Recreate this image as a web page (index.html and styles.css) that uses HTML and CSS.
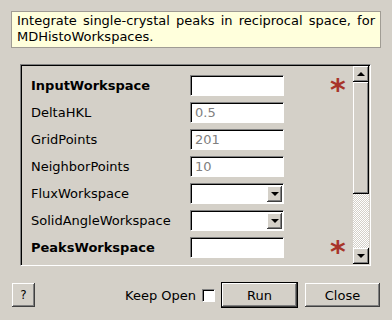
FILE: index.html
```html
<!DOCTYPE html>
<html lang="en">
<head>
  <meta charset="UTF-8">
  <title>IntegratePeaksMDHKL</title>
  <link rel="stylesheet" href="styles.css">
</head>
<body>
  <div class="dialog">
    <div class="desc">Integrate single-crystal peaks in reciprocal space, for MDHistoWorkspaces.</div>

    <div class="frame">
      <div class="props">
        <div class="row">
          <span class="label bold">InputWorkspace</span>
          <span class="field"></span>
          <span class="star">*</span>
        </div>
        <div class="row">
          <span class="label">DeltaHKL</span>
          <span class="field">0.5</span>
        </div>
        <div class="row">
          <span class="label">GridPoints</span>
          <span class="field">201</span>
        </div>
        <div class="row">
          <span class="label">NeighborPoints</span>
          <span class="field">10</span>
        </div>
        <div class="row">
          <span class="label">FluxWorkspace</span>
          <span class="field combo"><span class="drop"><i class="down"></i></span></span>
        </div>
        <div class="row">
          <span class="label">SolidAngleWorkspace</span>
          <span class="field combo"><span class="drop"><i class="down"></i></span></span>
        </div>
        <div class="row">
          <span class="label bold">PeaksWorkspace</span>
          <span class="field"></span>
          <span class="star">*</span>
        </div>
      </div>
      <div class="scrollbar">
        <span class="arrow"><i class="up"></i></span>
        <span class="handle"></span>
        <span class="track"></span>
        <span class="arrow"><i class="down"></i></span>
      </div>
    </div>

    <div class="buttons">
      <span class="btn help">?</span>
      <span class="keep">Keep Open <span class="check"></span></span>
      <span class="btn run">Run</span>
      <span class="btn close">Close</span>
    </div>
  </div>
</body>
</html>
```

FILE: styles.css
```css
body {
  margin: 0;
  background-color: #d4d0c8;
  font-family: 'DejaVu Sans', sans-serif;
  font-size: 13px;
  color: #000;
}

.dialog {
  width: 392px;
  height: 320px;
  padding: 11px 12px 0 11px;
  box-sizing: border-box;
}

.desc {
  background-color: #ffffdc;
  border: 1px solid #a09c94;
  padding: 1px 5px 2px 5px;
  line-height: 16px;
  height: 37px;
  box-sizing: border-box;
  text-align: justify;
  text-align-last: left;
  margin-right: -1px;
}

.frame {
  display: flex;
  margin: 16px 9px 0 9px;
  height: 202px;
  box-sizing: border-box;
  border-top: 1px solid #808080;
  border-left: 1px solid #808080;
  border-bottom: 1px solid #fff;
  border-right: 1px solid #fff;
  box-shadow: inset 1px 1px 0 #000;
}

.props {
  flex: 1;
  padding: 10px 0 0 10px;
  display: flex;
  flex-direction: column;
  gap: 6px;
}

.row {
  display: flex;
  align-items: center;
  height: 21px;
  flex-shrink: 0;
}

.label {
  width: 159px;
  white-space: nowrap;
}

.bold {
  font-weight: bold;
}

.field {
  width: 94px;
  height: 21px;
  box-sizing: border-box;
  background-color: #fff;
  border-top: 1px solid #808080;
  border-left: 1px solid #808080;
  border-bottom: 1px solid #fff;
  border-right: 1px solid #fff;
  box-shadow: inset 1px 1px 0 #000;
  color: #808080;
  padding: 1px 0 0 4px;
  line-height: 17px;
  position: relative;
}

.combo {
  padding: 0;
}

.drop {
  position: absolute;
  right: 1px;
  top: 2px;
  width: 15px;
  height: 16px;
  background-color: #d4d0c8;
  box-shadow: inset -1px -1px 0 #404040, inset 1px 1px 0 #fff, inset -2px -2px 0 #808080;
  display: flex;
  align-items: center;
  justify-content: center;
}

.star {
  margin-left: 46px;
  color: #a8342a;
  font-size: 30px;
  font-weight: bold;
  line-height: 21px;
  height: 21px;
  padding-top: 4px;
  box-sizing: border-box;
}

.scrollbar {
  width: 16px;
  display: flex;
  flex-direction: column;
  margin: 1px 1px 1px 0;
}

.arrow {
  height: 16px;
  background-color: #d4d0c8;
  box-shadow: inset -1px -1px 0 #000, inset 1px 1px 0 #fff, inset -2px -2px 0 #808080;
  display: flex;
  align-items: center;
  justify-content: center;
  flex-shrink: 0;
}

.handle {
  height: 112px;
  background-color: #d4d0c8;
  box-shadow: inset -1px -1px 0 #000, inset 1px 1px 0 #fff, inset -2px -2px 0 #808080;
  flex-shrink: 0;
}

.track {
  flex: 1;
  background-color: #e8e6e2;
  background-image: repeating-conic-gradient(#fff 0 25%, #d4d0c8 0 50%);
  background-size: 2px 2px;
}

.up, .down {
  width: 0;
  height: 0;
  border-left: 4px solid transparent;
  border-right: 4px solid transparent;
}

.up {
  border-bottom: 4px solid #000;
}

.down {
  border-top: 4px solid #000;
}

.buttons {
  display: flex;
  align-items: center;
  margin-top: 16px;
  height: 26px;
}

.btn {
  height: 24px;
  box-sizing: border-box;
  display: flex;
  align-items: center;
  justify-content: center;
  background-color: #d4d0c8;
  box-shadow: inset -1px -1px 0 #404040, inset 1px 1px 0 #fff, inset -2px -2px 0 #808080;
}

.help {
  width: 23px;
  margin-left: 1px;
  font-size: 12px;
}

.keep {
  margin-left: auto;
  display: flex;
  align-items: center;
  gap: 6px;
}

.check {
  width: 13px;
  height: 13px;
  box-sizing: border-box;
  background-color: #fff;
  border-top: 1px solid #808080;
  border-left: 1px solid #808080;
  border-bottom: 1px solid #fff;
  border-right: 1px solid #fff;
  box-shadow: inset 1px 1px 0 #000;
}

.run {
  width: 77px;
  height: 26px;
  margin-left: 6px;
  border: 1px solid #000;
}

.close {
  width: 75px;
  margin-left: 7px;
}
```
